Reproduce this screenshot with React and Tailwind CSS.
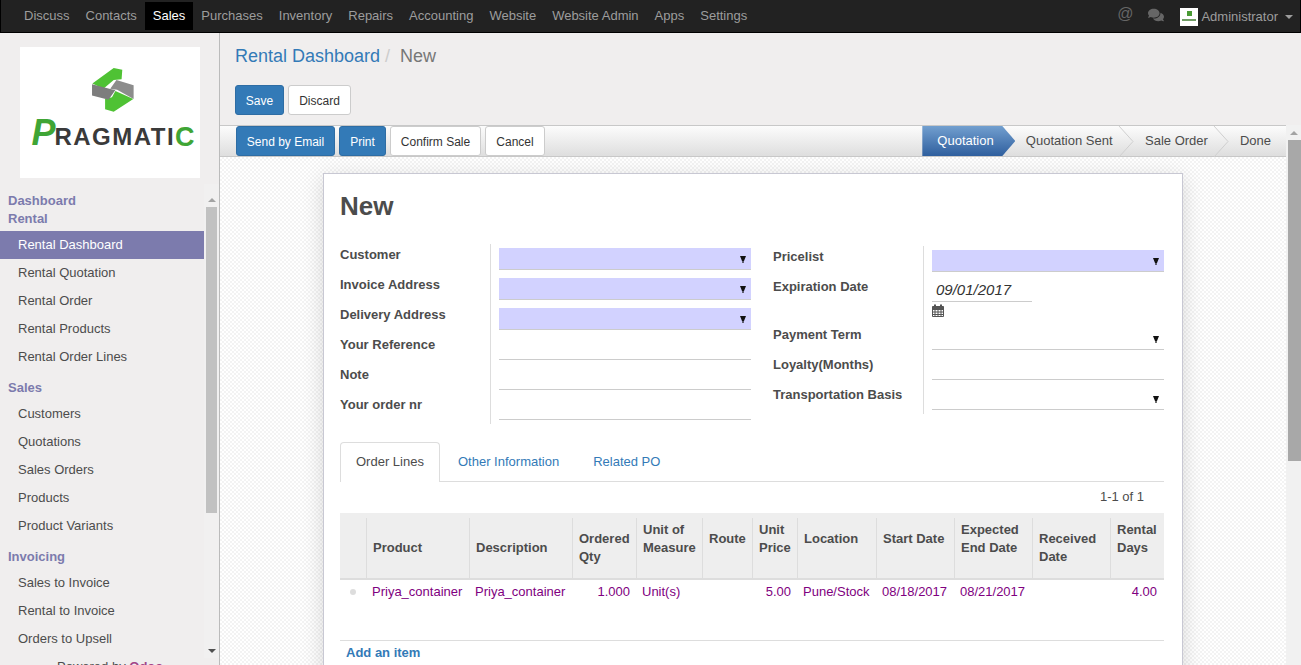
import React from "react";
import { FaComments } from "react-icons/fa";

const navItems = ["Discuss", "Contacts", "Sales", "Purchases", "Inventory", "Repairs", "Accounting", "Website", "Website Admin", "Apps", "Settings"];

const menu = [
  { titles: ["Dashboard", "Rental"], items: ["Rental Dashboard", "Rental Quotation", "Rental Order", "Rental Products", "Rental Order Lines"] },
  { titles: ["Sales"], items: ["Customers", "Quotations", "Sales Orders", "Products", "Product Variants"] },
  { titles: ["Invoicing"], items: ["Sales to Invoice", "Rental to Invoice", "Orders to Upsell"] },
];

const columns = [
  { lines: [""], w: "w-[26px]", pt: "pt-0" },
  { lines: ["Product"], w: "w-[103px]", pt: "pt-[21px]" },
  { lines: ["Description"], w: "w-[103px]", pt: "pt-[21px]" },
  { lines: ["Ordered", "Qty"], w: "w-[64px]", pt: "pt-[12px]" },
  { lines: ["Unit of", "Measure"], w: "w-[66px]", pt: "pt-[3px]" },
  { lines: ["Route"], w: "w-[50px]", pt: "pt-[12px]" },
  { lines: ["Unit", "Price"], w: "w-[45px]", pt: "pt-[3px]" },
  { lines: ["Location"], w: "w-[79px]", pt: "pt-[12px]" },
  { lines: ["Start Date"], w: "w-[78px]", pt: "pt-[12px]" },
  { lines: ["Expected", "End Date"], w: "w-[78px]", pt: "pt-[3px]" },
  { lines: ["Received", "Date"], w: "w-[78px]", pt: "pt-[12px]" },
  { lines: ["Rental", "Days"], w: "w-[54px]", pt: "pt-[3px]" },
];

function Arrow() {
  return (
    <svg width="8" height="9" viewBox="0 0 8 9" className="absolute right-[4px] top-[7px]">
      <path d="M1 1h6L5 6H3z M3.4 6h1.2v2H3.4z" fill="#111" />
    </svg>
  );
}

function Field({ fill, arrow }) {
  return (
    <div className={`relative h-[22px] border-b border-[#ccc] ${fill ? "bg-[#d2d2ff]" : ""}`}>
      {arrow && <Arrow />}
    </div>
  );
}

function Label({ children, h = "h-[30px]" }) {
  return <div className={`${h} pt-[2px] font-bold leading-[18px] whitespace-nowrap`}>{children}</div>;
}

function Chevron() {
  return (
    <svg width="16" height="31" viewBox="0 0 16 31" className="shrink-0">
      <path d="M1 0l14 15.5L1 31" fill="none" stroke="#cfcfcf" strokeWidth="1" />
    </svg>
  );
}

function LogoMark() {
  return (
    <svg width="42" height="44" viewBox="277 205 122 128">
      <path d="M340 205l25 5-2 28-23 2-30 25-32-15z" fill="#4fc234" />
      <path d="M345 272l52 23-57 37-25-7v-30l20-5z" fill="#4fc234" />
      <path d="M277 252l53 14 15 3-20 28-48-12z" fill="#7d7d7d" />
      <path d="M348 240l50 15v40l-48-27-20-3z" fill="#8c8c8c" />
    </svg>
  );
}

export default function App() {
  return (
    <div className="h-screen overflow-hidden flex flex-col text-[13px] leading-[18px] text-[#4c4c4c] bg-white font-['Liberation_Sans',Arial,sans-serif]">
      {/* top bar */}
      <div className="h-[33px] shrink-0 bg-[#222] border border-t-0 border-black flex items-center justify-between pl-[15px] pr-[7px]">
        <div className="flex">
          {navItems.map((item) => (
            <span key={item} className={`h-[28px] px-[8px] flex items-center ${item === "Sales" ? "bg-black text-white" : "text-[#9d9d9d]"}`}>
              {item}
            </span>
          ))}
        </div>
        <div className="flex items-center text-[#9d9d9d] mt-px">
          <span className="text-[16px] text-[#666] mr-[15px] -mt-[5px]">@</span>
          <FaComments className="text-[#666] w-[16px] h-[16px] mr-[16px] -mt-[3px]" />
          <div className="w-[18px] h-[18px] bg-white mr-[3px] flex flex-col items-center pt-[3px]">
            <div className="w-[5px] h-[5px] bg-[#4a9b35]" />
            <div className="w-[14px] h-[2px] mt-[3px] bg-[#6f9d64]" />
          </div>
          <span>Administrator</span>
          <span className="ml-[7px] w-0 h-0 border-x-[4px] border-x-transparent border-t-[4px] border-t-[#9d9d9d]" />
        </div>
      </div>

      <div className="flex-1 min-h-0 flex">
        {/* sidebar */}
        <div className="w-[220px] shrink-0 bg-[#f0eeee] border-r border-[#bbb] overflow-hidden">
          <div className="h-[151px] pt-[14px] pl-[20px]">
            <div className="w-[180px] h-[131px] bg-white flex flex-col items-center pt-[21px]">
              <div className="ml-[5px]"><LogoMark /></div>
              <div className="flex items-end leading-none font-bold mt-[7px] ml-[6px] whitespace-nowrap text-[#3a3a3a] text-[24px]">
                <span className="text-[36px] italic text-[#3fa535] leading-[28px]">P</span>
                <span className="leading-[20px] tracking-[1.5px] -ml-px">RAGMATI</span>
                <span className="text-[#3fa535] text-[27px] leading-[20px]">C</span>
              </div>
            </div>
          </div>
          <div className="h-[474px] flex">
            <div className="w-[204px] shrink-0 overflow-hidden">
              {menu.map((group) => (
                <div key={group.titles[0]}>
                  <div className="pt-[8px] mb-[3px]">
                    {group.titles.map((t) => (
                      <div key={t} className="pl-[8px] font-bold text-[#7c7bad]">{t}</div>
                    ))}
                  </div>
                  {group.items.map((item) => (
                    <div key={item} className={`h-[28px] pl-[18px] flex items-center ${item === "Rental Dashboard" ? "bg-[#7c7bad] text-white" : ""}`}>
                      {item}
                    </div>
                  ))}
                </div>
              ))}
            </div>
            <div className="w-[15px] bg-[#f1f0f0] flex flex-col items-center">
              <span className="mt-[14px] w-0 h-0 border-x-[4px] border-x-transparent border-b-[4px] border-b-[#a3a3a3]" />
              <div className="mt-[5px] w-[11px] h-[306px] bg-[#c1c1c1]" />
              <span className="mt-[136px] w-0 h-0 border-x-[4px] border-x-transparent border-t-[4px] border-t-[#505050]" />
            </div>
          </div>
          <div className="pl-[57px] whitespace-nowrap">
            Powered by <span className="font-bold text-[#a24689]">Odoo</span>
          </div>
        </div>

        {/* main */}
        <div className="flex-1 min-w-0 flex flex-col">
          <div className="h-[92px] shrink-0 bg-[#f0eeee] pl-[15px]">
            <div className="pt-[12px] h-[52px] text-[18px] leading-[22px] whitespace-nowrap">
              <span className="text-[#337ab7]">Rental Dashboard</span>
              <span className="text-[#ccc] pl-[5px] pr-[10px]">/</span>
              <span className="text-[#777]">New</span>
            </div>
            <div className="flex gap-[4px]">
              <button className="h-[30px] w-[49px] pt-px text-[12px] rounded-[3px] bg-[#337ab7] border border-[#2e6da4] text-white">Save</button>
              <button className="h-[30px] w-[63px] pt-px text-[12px] rounded-[3px] bg-white border border-[#ccc] text-[#333]">Discard</button>
            </div>
          </div>

          <div className="flex-1 min-h-0 flex">
            <div className="flex-1 min-w-0 flex flex-col">
              {/* status bar */}
              <div className="h-[32px] shrink-0 border-y border-[#c8c8c8] bg-gradient-to-b from-[#fcfcfc] to-[#dedede] flex justify-between pl-[16px] whitespace-nowrap">
                <div className="flex gap-[4px] text-[12px] h-[30px]">
                  <button className="w-[99px] pt-px rounded-[3px] bg-[#337ab7] border border-[#2e6da4] text-white">Send by Email</button>
                  <button className="w-[47px] pt-px rounded-[3px] bg-[#337ab7] border border-[#2e6da4] text-white">Print</button>
                  <button className="w-[91px] pt-px rounded-[3px] bg-white border border-[#ccc] text-[#333]">Confirm Sale</button>
                  <button className="w-[60px] pt-px rounded-[3px] bg-white border border-[#ccc] text-[#333]">Cancel</button>
                </div>
                <div className="flex items-center h-[30px]">
                  <div className="w-[93px] h-[30px] pl-[15px] flex items-center text-white bg-gradient-to-b from-[#729fcf] to-[#2f5f9e] [clip-path:polygon(0_0,80px_0,100%_50%,80px_100%,0_100%)]">
                    Quotation
                  </div>
                  <span className="ml-[10.5px] mr-[5.5px]">Quotation Sent</span>
                  <Chevron />
                  <span className="ml-[11px] mr-[5px]">Sale Order</span>
                  <Chevron />
                  <span className="ml-[11px] mr-[15px]">Done</span>
                </div>
              </div>

              {/* form */}
              <div className="flex-1 min-h-0 overflow-hidden pt-[16px] bg-[repeating-conic-gradient(#f3f3f3_0_25%,#fff_0_50%)] bg-[length:4px_4px]">
                <div className="w-[860px] mx-auto bg-white border border-[#c8c8d3] shadow-[0_5px_20px_rgba(0,0,0,0.15)] pl-[16px] pr-[18px] pb-[40px]">
                  <h1 className="text-[26px] leading-[30px] font-bold pt-[17px] h-[70px]">New</h1>

                  <div className="flex gap-[22px]">
                    <div className="w-[411px] flex items-start">
                      <div className="w-[151px] border-r border-[#ddd]">
                        {["Customer", "Invoice Address", "Delivery Address", "Your Reference", "Note", "Your order nr"].map((l) => (
                          <Label key={l}>{l}</Label>
                        ))}
                      </div>
                      <div className="w-[252px] ml-[8px]">
                        {[1, 2, 3].map((n) => (
                          <div key={n} className="h-[30px] pt-[4px]"><Field fill arrow /></div>
                        ))}
                        {[1, 2, 3].map((n) => (
                          <div key={n} className="h-[30px] pt-[4px]"><Field /></div>
                        ))}
                      </div>
                    </div>

                    <div className="w-[391px] flex items-start mt-[2px]">
                      <div className="w-[151px] border-r border-[#ddd]">
                        <Label>Pricelist</Label>
                        <Label h="h-[48px]">Expiration Date</Label>
                        <Label>Payment Term</Label>
                        <Label>Loyalty(Months)</Label>
                        <Label>Transportation Basis</Label>
                      </div>
                      <div className="w-[232px] ml-[8px]">
                        <div className="h-[30px] pt-[4px]"><Field fill arrow /></div>
                        <div className="h-[48px] pt-[4px]">
                          <div className="w-[100px] h-[22px] border-b border-[#ccc] pl-[4px] text-[15px] italic text-[#333] leading-[20px]">09/01/2017</div>
                          <svg width="12" height="13" viewBox="0 0 12 13" className="mt-[2px]">
                            <path d="M.5 2.5h11v10H.5zM.5 5.5h11M.5 8h11M.5 10.5h11M3 5.5v7M6 5.5v7M9 5.5v7" fill="none" stroke="#555" />
                            <path d="M2 .5h2v3H2zM8 .5h2v3H8z" fill="#555" />
                            <path d="M.5 2.5h11v3H.5z" fill="#555" />
                          </svg>
                        </div>
                        <div className="h-[30px] pt-[4px]"><Field arrow /></div>
                        <div className="h-[30px] pt-[4px]"><Field /></div>
                        <div className="h-[30px] pt-[4px]"><Field arrow /></div>
                      </div>
                    </div>
                  </div>

                  {/* tabs */}
                  <div className="mt-[18px] h-[40px] flex border-b border-[#ddd]">
                    <div className="h-[40px] w-[100px] pl-[15px] pb-[1px] flex items-center bg-white border border-b-0 border-[#ddd] rounded-t-[4px]">Order Lines</div>
                    <div className="h-[39px] pl-[18px] pr-[17px] flex items-center text-[#337ab7]">Other Information</div>
                    <div className="h-[39px] pl-[17px] flex items-center text-[#337ab7]">Related PO</div>
                  </div>

                  <div className="h-[31px] flex items-center justify-end pr-[20px] pb-[1px]">1-1 of 1</div>

                  <table className="w-[824px] table-fixed border-collapse">
                    <colgroup>
                      {columns.map((c, i) => (
                        <col key={i} className={c.w} />
                      ))}
                    </colgroup>
                    <thead className="bg-[#eee]">
                      <tr className="h-[5px]">
                        <th colSpan={12} />
                      </tr>
                      <tr className="border-b-2 border-[#ddd]">
                        {columns.map((c, i) => (
                          <th key={i} className={`h-[61px] align-top text-left font-bold pl-[6.5px] ${c.pt} ${i > 0 ? "border-l border-[#ddd]" : ""}`}>
                            {c.lines.map((l) => (
                              <div key={l} className="whitespace-nowrap">{l}</div>
                            ))}
                          </th>
                        ))}
                      </tr>
                    </thead>
                    <tbody className="text-[#800080]">
                      <tr className="h-[24px]">
                        <td><div className="ml-[10px] w-[6px] h-[6px] rounded-full bg-[#ddd]" /></td>
                        <td className="pl-[6px] whitespace-nowrap">Priya_container</td>
                        <td className="pl-[6px] whitespace-nowrap">Priya_container</td>
                        <td className="pr-[6px] text-right">1.000</td>
                        <td className="pl-[6px]">Unit(s)</td>
                        <td />
                        <td className="pr-[6px] text-right">5.00</td>
                        <td className="pl-[6px] whitespace-nowrap">Pune/Stock</td>
                        <td className="pl-[6px]">08/18/2017</td>
                        <td className="pl-[6px]">08/21/2017</td>
                        <td />
                        <td className="pr-[7px] text-right">4.00</td>
                      </tr>
                    </tbody>
                  </table>
                  <div className="mt-[37px] border-t border-[#ddd] pl-[6px] pt-[3px] font-bold text-[#337ab7]">Add an item</div>
                </div>
              </div>
            </div>

            {/* page scrollbar */}
            <div className="w-[15px] shrink-0 bg-[#f1f1f1] flex flex-col items-end">
              <span className="mt-[6px] mr-[3px] w-0 h-0 border-x-[4px] border-x-transparent border-b-[4px] border-b-[#a3a3a3]" />
              <div className="mt-[5px] w-[13px] h-[321px] bg-[#a8a8a8]" />
            </div>
          </div>
        </div>
      </div>
    </div>
  );
}
